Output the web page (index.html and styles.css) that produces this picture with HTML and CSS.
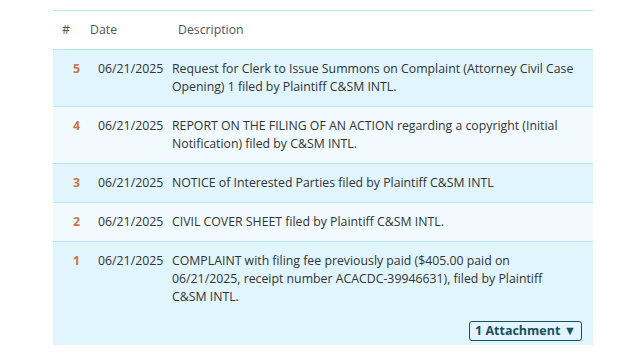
FILE: index.html
```html
<!DOCTYPE html>
<html lang="en">
<head>
<meta charset="utf-8">
<link rel="stylesheet" href="styles.css">
</head>
<body>
<div class="docket">
  <div class="row head">
    <div class="c-num">#</div>
    <div class="c-date">Date</div>
    <div class="c-desc">Description</div>
  </div>
  <div class="row odd">
    <div class="c-num">5</div>
    <div class="c-date">06/21/2025</div>
    <div class="c-desc">Request for Clerk to Issue Summons on Complaint (Attorney Civil Case Opening) 1 filed by Plaintiff C&amp;SM INTL.</div>
  </div>
  <div class="row even">
    <div class="c-num">4</div>
    <div class="c-date">06/21/2025</div>
    <div class="c-desc">REPORT ON THE FILING OF AN ACTION regarding a copyright (Initial Notification) filed by C&amp;SM INTL.</div>
  </div>
  <div class="row odd">
    <div class="c-num">3</div>
    <div class="c-date">06/21/2025</div>
    <div class="c-desc">NOTICE of Interested Parties filed by Plaintiff C&amp;SM INTL</div>
  </div>
  <div class="row even">
    <div class="c-num">2</div>
    <div class="c-date">06/21/2025</div>
    <div class="c-desc">CIVIL COVER SHEET filed by Plaintiff C&amp;SM INTL.</div>
  </div>
  <div class="row odd last">
    <div class="c-num">1</div>
    <div class="c-date">06/21/2025</div>
    <div class="c-desc">
      <div class="desc-text">COMPLAINT with filing fee previously paid ($405.00 paid on 06/21/2025, receipt number ACACDC-39946631), filed by Plaintiff C&amp;SM INTL.</div>
      <div class="attach-row"><button class="attach">1 Attachment ▼</button></div>
    </div>
  </div>
</div>
</body>
</html>
```

FILE: styles.css
```css
html, body {
  margin: 0;
  padding: 0;
  background: #ffffff;
}
body {
  font-family: "Open Sans", "Noto Sans", sans-serif;
  font-size: 12.3px;
  line-height: 18px;
  color: #333333;
}
.docket {
  margin: 10px 29px 0 53px;
  width: 540px;
  border-top: 1px solid #b3e5fc;
}
.row {
  display: grid;
  grid-template-columns: 37px 78px 1fr;
  border-bottom: 1px solid #b3e5fc;
}
.row.last {
  border-bottom: none;
}
.row.odd { background: #e1f5fe; }
.row.even { background: #f0faff; }
.row > div {
  padding: 10px 0;
}
.head {
  background: #ffffff;
  color: #555555;
}
.head .c-num { padding-left: 9px; }
.head .c-date { padding-left: 0; }
.head .c-desc { padding-left: 10px; }
.row:not(.head) .c-num {
  text-align: right;
  padding-right: 10px;
  font-weight: 700;
  color: #cc7444;
}
.row:not(.head) .c-date { padding-left: 8px; }
.row:not(.head) .c-desc { padding-left: 4px; padding-right: 15px; }
.row.last > div { padding-bottom: 4px; }
.attach-row {
  display: flex;
  justify-content: flex-end;
  margin-top: 15px;
  margin-right: -4px;
}
.attach {
  font-family: inherit;
  font-size: 12.5px;
  font-weight: 700;
  line-height: 16px;
  color: #1c4e60;
  background: transparent;
  border: 1px solid #1c4e60;
  border-radius: 3px;
  padding: 1px 5px;
  height: 20px;
}
```
